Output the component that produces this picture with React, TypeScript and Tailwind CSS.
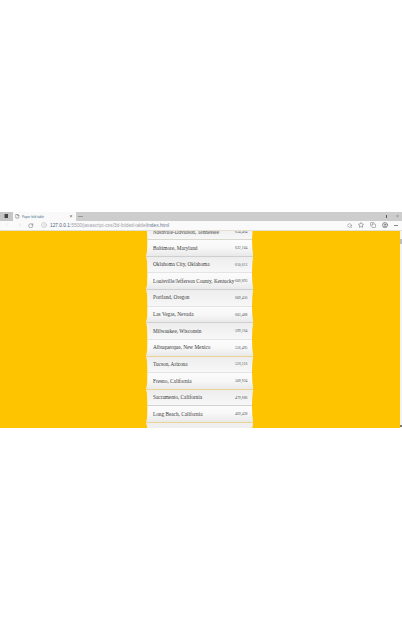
import React from "react";
import { RotateCw, Info, Star, Search, Copy, CircleUser, ChevronLeft, ChevronRight, File } from "lucide-react";

type Row = { city: string; population: string; width: number; line: string };

const dark = "bg-[#cfcfcf]";
const light = "bg-[#e4e4e4]";
const gold = "bg-[#ecd493]";

const rows: Row[] = [
  { city: "Baltimore, Maryland", population: "622,104", width: 44.5, line: "bg-[#d8d8cc]" },
  { city: "Oklahoma City, Oklahoma", population: "610,613", width: 56.5, line: dark },
  { city: "Louisville/Jefferson County, Kentucky", population: "609,893", width: 81.3, line: light },
  { city: "Portland, Oregon", population: "609,456", width: 36.5, line: dark },
  { city: "Las Vegas, Nevada", population: "603,488", width: 40.5, line: light },
  { city: "Milwaukee, Wisconsin", population: "599,164", width: 48.5, line: dark },
  { city: "Albuquerque, New Mexico", population: "556,495", width: 57.5, line: light },
  { city: "Tucson, Arizona", population: "526,116", width: 34.5, line: gold },
  { city: "Fresno, California", population: "509,924", width: 38.5, line: light },
  { city: "Sacramento, California", population: "479,686", width: 49, line: gold },
  { city: "Long Beach, California", population: "469,428", width: 49.5, line: "bg-[#d2d2d2]" },
];

function Label({ text, width, size }: { text: string; width: number; size: number }) {
  return (
    <svg width={width} height="8" className="shrink-0 overflow-visible">
      <text x="0" y="5.5" fontSize={size} textLength={width} lengthAdjust="spacingAndGlyphs" fill="currentColor">
        {text}
      </text>
    </svg>
  );
}

function Fold({ row, index }: { row: Row; index: number }) {
  const shade =
    index % 2 === 0
      ? "bg-linear-to-b from-[#fcfcfc] via-[#f8f8f8] to-[#e9e9e9]"
      : "bg-linear-to-b from-[#ececec] via-[#f2f2f2] to-[#f7f7f7]";
  return (
    <li className={`flex h-[16.64px] shrink-0 flex-col ${shade}`}>
      <div className={`h-px w-full shrink-0 ${row.line}`} />
      <div className="flex flex-1 items-center pb-[1px] pl-[6.8px]">
        <div className="w-[82px] shrink-0 text-[#3a3a3a]">
          <Label text={row.city} width={row.width} size={5.8} />
        </div>
        <div className="-mt-[1px] text-[#555]">
          <Label text={row.population} width={12.5} size={4.3} />
        </div>
      </div>
    </li>
  );
}

export default function App() {
  return (
    <div className="h-[640px] w-[402px] bg-white pt-[212px] font-['Liberation_Serif',serif]">
      <div className="flex h-[216px] flex-col overflow-hidden">
        <div className="flex h-[8.5px] shrink-0 items-center bg-[#cdcdcd] font-['Liberation_Sans',sans-serif] text-[#555]">
          <div className="flex h-full w-[13px] items-center bg-[#c6c6c6] pl-[4px]">
            <div className="h-[4px] w-[4px] border-l-[1.5px] border-[#888] bg-[#444]" />
          </div>
          <div className="flex h-full w-[63px] items-center bg-[#f9f9f9] pl-[2px]">
            <File size={4.5} strokeWidth={2.5} />
            <div className="ml-[2px] flex w-[48px] text-[#45708c]">
              <Label text="Paper fold table" width={22} size={4} />
            </div>
            <span className="text-[5px] leading-none">×</span>
          </div>
          <div className="ml-[2px] h-px w-[5px] bg-[#999]" />
          <div className="ml-[303px] h-[3px] w-px bg-[#555]" />
          <span className="ml-[9px] text-[5px] leading-none text-[#888]">×</span>
        </div>
        <div className="flex h-[10.5px] shrink-0 items-center border-b border-[#e4e0d2] bg-[#fafafa] font-['Liberation_Sans',sans-serif] text-[#777]">
          <ChevronLeft className="ml-[4px] text-[#e2e2e2]" size={6} />
          <ChevronRight className="ml-[7px] text-[#d0d0d0]" size={6} />
          <RotateCw className="ml-[5px]" size={5.5} strokeWidth={2.5} />
          <Info className="ml-[7px] text-[#aaa]" size={6} />
          <div className="ml-[3.5px] flex w-[119px] text-[#9ca0a8]">
            <svg width="119" height="8" className="overflow-visible">
              <text x="0" y="5.5" fontSize="4.7" textLength="119" lengthAdjust="spacingAndGlyphs" fill="currentColor">
                <tspan fill="#4b5e78">127.0.0.1</tspan>:5500/javascript-css/3d-folded-table<tspan fill="#687894">/index.html</tspan>
              </text>
            </svg>
          </div>
          <div className="ml-auto flex items-center gap-[6px] pr-[4px]">
            <Search size={5.5} />
            <Star size={6} strokeWidth={2.5} />
            <Copy size={6} />
            <CircleUser size={6} strokeWidth={3} />
            <span className="h-[1px] w-[4px] bg-[#888]" />
          </div>
        </div>
        <div className="flex h-[197px] shrink-0 overflow-hidden bg-[#ffc400]">
          <ul className="ml-[146.2px] flex h-[197px] w-[107px] shrink-0 flex-col bg-[#eeeeee] [clip-path:polygon(0.8px_0,1.4px_8px,1.2px_18px,0.2px_25px,1.1px_32px,1.4px_42px,1.2px_52px,0.2px_58px,1.1px_65px,1.4px_75px,1.2px_85px,0.2px_91px,1.1px_98px,1.4px_108px,1.2px_118px,0.2px_125px,1.1px_132px,1.4px_141px,1.2px_151px,0.2px_158px,1.1px_165px,1.4px_175px,1.2px_185px,0.2px_191px,1px_197px,106px_197px,106.8px_191px,106px_185px,105.8px_175px,106px_165px,106.8px_158px,106px_151px,105.8px_141px,106px_132px,106.8px_125px,106px_118px,105.8px_108px,106px_98px,106.8px_91px,106px_85px,105.8px_75px,106px_65px,106.8px_58px,106px_52px,105.8px_42px,106px_32px,106.8px_25px,106px_18px,105.8px_8px,106.2px_0)]">
            <li className="flex h-[8.2px] shrink-0 items-start overflow-hidden bg-linear-to-b from-[#f0f0f0] to-[#f7f7f7] pl-[6.8px]">
              <div className="-mt-[3.3px] w-[82px] shrink-0 text-[#444]">
                <Label text="Nashville-Davidson, Tennessee" width={66} size={5.8} />
              </div>
              <div className="-mt-[3.8px] text-[#555]">
                <Label text="634,464" width={12.5} size={4.3} />
              </div>
            </li>
            {rows.map((row, index) => (
              <Fold key={row.city} row={row} index={index} />
            ))}
            <li className="flex h-[16px] shrink-0 flex-col bg-[#efefef]">
              <div className="h-px bg-[#ecd493]" />
            </li>
          </ul>
          <div className="ml-auto flex h-full w-[2.5px] flex-col items-center bg-[#f3f3f3]">
            <div className="mt-[8px] h-[5px] w-full bg-[#bebebe]" />
            <div className="mt-auto mb-px h-[2px] w-[1.5px] bg-[#777]" />
          </div>
        </div>
      </div>
    </div>
  );
}
